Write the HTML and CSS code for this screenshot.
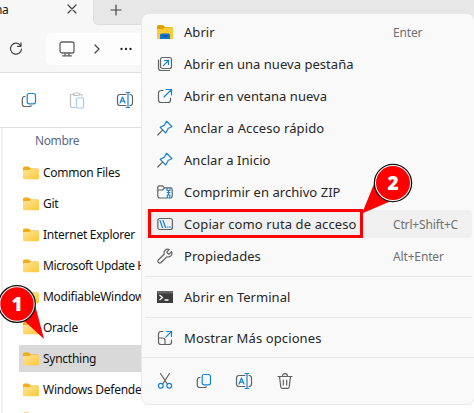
FILE: index.html
```
<!DOCTYPE html>
<html lang="es">
<head>
<meta charset="utf-8">
<title>Explorador</title>
<link rel="stylesheet" href="styles.css">
</head>
<body>
<svg class="defs" width="0" height="0">
  <defs>
    <linearGradient id="gold" x1="0" y1="0" x2="1" y2="1"><stop offset="0" stop-color="#ffe49a"/><stop offset="1" stop-color="#fbc936"/></linearGradient>
    <symbol id="folder" viewBox="0 0 16 14"><path d="M0 2Q0 .5 1.500 .5H5.500L8 2.500H14.500Q16 2.500 16 4V8H0Z" fill="#f0ad16"/><path d="M0 5Q0 4 1 4H6L8 3H15Q16 3 16 4V12Q16 13.300 14.700 13.300H1.300Q0 13.300 0 12Z" fill="url(#gold)"/></symbol>
    <symbol id="copy" viewBox="0 0 16 16"><rect class="b" x="6.200" y="1.500" width="8.300" height="10.300" rx="2"/><path class="g" d="M4 4.500H3.500Q1.300 4.800 1.300 7V12Q1.300 14.500 3.800 14.500H8Q9.800 14.500 10.300 13.800"/></symbol>
    <symbol id="rename" viewBox="0 0 18 18"><path class="g" d="M10 3.500H4Q1.500 3.500 1.500 6V12Q1.500 14.500 4 14.500H10M14 3.500Q16.500 3.500 16.500 6V12Q16.500 14.500 14 14.500"/><path class="b" d="M4 12L6.500 6L9 12M5 10.200H8M12 1.500V16.500M10.200 1.500H13.800M10.200 16.500H13.800"/></symbol>
    <symbol id="pin" viewBox="0 0 16 16"><path class="b" d="M9.500 1.200L14.900 6.500L13.500 7.500L11.300 8.300L8.700 13L3.200 7.400L7.300 5.200Z"/><path class="g" d="M5.500 10.200L.8 15"/></symbol>
  </defs>
</svg>
<div class="screen">
  <main class="window">
    <header class="tabs">
      <div class="tab"><span class="tab-name">na</span><svg class="close" viewBox="0 0 10 10"><path class="k" d="M1 1L9 9M9 1L1 9"/></svg></div>
      <div class="strip"><svg class="plus" viewBox="0 0 12 12"><path class="k" d="M6 1V11M1 6H11"/></svg></div>
    </header>
    <nav class="address">
      <svg class="refresh" viewBox="0 0 14 14"><path class="k" d="M11.500 3.500A5.500 5.500 0 1 0 12.500 7M12 .8V4.300H8.500"/></svg>
      <div class="path">
        <svg class="monitor" viewBox="0 0 16 16"><rect class="g m" x="1" y="1" width="14" height="11" rx="2"/><path class="g m" d="M3.500 14.800H12.500M6 12V15M10 12V15"/></svg>
        <svg class="chevron" viewBox="0 0 6 10"><path class="k" d="M1 1L5 5L1 9"/></svg>
        <svg class="dots" viewBox="0 0 12 4"><circle cx="1.500" cy="2" r="1.150"/><circle cx="6" cy="2" r="1.150"/><circle cx="10.500" cy="2" r="1.150"/></svg>
      </div>
    </nav>
    <div class="toolbar">
      <svg class="i16"><use href="#copy"/></svg>
      <svg class="paste" viewBox="0 0 16 17"><path class="g" d="M5 2.500H2.500Q1.500 2.500 1.500 3.500V14Q1.500 15.500 3 15.500H6M10.500 2.500H12Q13 2.500 13 4"/><rect class="g" x="4.500" y="1" width="6" height="2.500" rx="1.200"/><rect class="b" x="7.500" y="6" width="7" height="10" rx="1"/></svg>
      <svg class="i18"><use href="#rename"/></svg>
    </div>
    <section class="files">
      <div class="heading">Nombre</div>
      <div class="row"><svg><use href="#folder"/></svg><span>Common Files</span></div>
      <div class="row"><svg><use href="#folder"/></svg><span>Git</span></div>
      <div class="row"><svg><use href="#folder"/></svg><span>Internet Explorer</span></div>
      <div class="row long"><svg><use href="#folder"/></svg><span>Microsoft Update Health</span></div>
      <div class="row"><svg><use href="#folder"/></svg><span>ModifiableWindowsApps</span></div>
      <div class="row"><svg><use href="#folder"/></svg><span>Oracle</span></div>
      <div class="row selected"><svg><use href="#folder"/></svg><span>Syncthing</span></div>
      <div class="row"><svg><use href="#folder"/></svg><span>Windows Defender</span></div>
      <div class="row last"><svg><use href="#folder"/></svg></div>
    </section>
  </main>

  <aside class="menu">
    <div class="group first">
      <div class="item"><svg viewBox="0 0 16 16"><path d="M0 2.500Q0 1 1.500 1H6L8 3H14.500Q16 3 16 4.500V14Q16 15 15 15H1Q0 15 0 14Z" fill="#e3a008"/><path d="M0 5H6L8 3.500H16V15H0Z" fill="#ffca35"/><path d="M3 15V11Q3 9.500 4.500 9.500H11.500Q13 9.500 13 11V15Z" fill="#1376cb"/><path d="M5.500 12H10.500" stroke="#064e94" stroke-width="1.200"/></svg><span class="label">Abrir</span><span class="key">Enter</span></div>
      <div class="item"><svg viewBox="0 0 16 16"><rect class="g" x="3.500" y="1.500" width="11" height="11" rx="2"/><path class="g" d="M1.500 4V12Q1.500 14.500 4 14.500H12.500"/><path class="b" d="M6.300 9.700L11.500 4.500M7.500 4.500H11.500V8.500"/></svg><span class="label">Abrir en una nueva pestaña</span></div>
      <div class="item"><svg viewBox="0 0 16 16"><path class="g" d="M6 2.500H4Q1.500 2.500 1.500 5V12Q1.500 14.500 4 14.500H11Q13.500 14.500 13.500 12V10"/><path class="b" d="M7 9L14.500 1.500M9 1.500H14.500V7"/></svg><span class="label">Abrir en ventana nueva</span></div>
      <div class="item"><svg><use href="#pin"/></svg><span class="label wide">Anclar a Acceso rápido</span></div>
      <div class="item"><svg><use href="#pin"/></svg><span class="label">Anclar a Inicio</span></div>
      <div class="item"><svg viewBox="0 0 16 16"><path class="g" d="M9.500 14H3Q.8 14 .8 12V3.500Q.8 1.800 2.500 1.800H5.500L7.500 3.800H13.500Q15.200 3.800 15.200 5.500V12Q15.200 14 13.500 14M.8 6H5.500L7.500 3.800"/><path class="b" d="M10 4V6.500H13V4M11.500 6.500V11M10.200 8.500H13M10.300 11H12.800V14H10.300Z"/></svg><span class="label">Comprimir en archivo ZIP</span></div>
      <div class="item hover"><svg viewBox="0 0 16 16"><rect class="g" x=".8" y="2.500" width="14.600" height="11" rx="2"/><path class="b" d="M3 4.500L5.500 11.500M6 4.500L8.500 11.500M10 11H11M12.500 11H13.500"/></svg><span class="label wide">Copiar como ruta de acceso</span><span class="key">Ctrl+Shift+C</span></div>
      <div class="item"><svg viewBox="0 0 16 16"><path class="g" d="M14.500 3.700L11.800 6.300L9.700 4.200L12.300 1.500C9.500.3 6.300 2.500 7.200 6.200L1.500 11.800C-.2 13.800 2.200 16.100 4.200 14.500L9.800 8.800C13.500 9.700 15.900 6.600 14.500 3.700Z"/></svg><span class="label">Propiedades</span><span class="key">Alt+Enter</span></div>
    </div>
    <div class="group terminal"><div class="item"><svg viewBox="0 0 16 16"><path d="M0 2H16V14H0Z" fill="#3c3c3c"/><path d="M0 2H16V4.500H0Z" fill="#666"/><path d="M2.500 6L5.500 8.500L2.500 11M7.500 11H11.500" fill="none" stroke="#fff" stroke-width="1.300"/></svg><span class="label">Abrir en Terminal</span></div></div>
    <div class="group more"><div class="item"><svg viewBox="0 0 16 16"><path class="g" d="M6 1.500H4Q1.500 1.500 1.500 4V12Q1.500 14.500 4 14.500H12Q14.500 14.500 14.500 12V10M1.500 8H5.500Q8 8 8 10.500V14.500"/><path class="b" d="M8.800 7.200L14.500 1.500M9.500 1.500H14.500V6.500"/></svg><span class="label wide">Mostrar Más opciones</span></div></div>
    <div class="actions">
      <svg class="i16" viewBox="0 0 16 16"><path class="g" d="M3.500 .5L10.300 11M12.500 .5L5.700 11"/><circle class="b" cx="3.800" cy="12.800" r="2.400"/><circle class="b" cx="12.200" cy="12.800" r="2.400"/></svg>
      <svg class="i16"><use href="#copy"/></svg>
      <svg class="i18"><use href="#rename"/></svg>
      <svg class="i16" viewBox="0 0 16 16"><path class="g" d="M1 3.500H15M5.500 3.300Q5.500 .7 8 .7Q10.500 .7 10.500 3.300M2.500 3.500L3.800 14Q4 15.400 5.300 15.400H10.700Q12 15.400 12.200 14L13.500 3.500M6.300 7V12M9.700 7V12"/></svg>
    </div>
  </aside>
  <div class="frame"></div>
  <svg class="callout one" viewBox="0 0 50 70"><path d="M19 31L44 54L35 20Z" fill="#f00"/><circle cx="17" cy="19" r="18.300" fill="#fff" stroke="#111" stroke-width="1.300"/><circle cx="17" cy="19" r="16.700" fill="#f00"/><text x="17" y="25.500">1</text></svg>
  <svg class="callout two" viewBox="0 0 60 60"><path d="M5 50.500L17 21L34 38Z" fill="#f00"/><circle cx="36" cy="20" r="18.600" fill="#fff" stroke="#111" stroke-width="1.300"/><circle cx="36" cy="20" r="17" fill="#f00"/><text x="36" y="26.500">2</text></svg>
</div>
</body>
</html>
```
FILE: styles.css
```
* { box-sizing: border-box; }
body { margin: 0; background: #fff; font-family: "Noto Sans", "Open Sans", sans-serif; }
svg { display: block; flex: none; }
.defs { position: absolute; }
.g, .b, .k { fill: none; stroke-width: 1.200; stroke-linecap: round; stroke-linejoin: round; }
.g { stroke: #626262; }
.b { stroke: #1683d8; }
.k { stroke: #444; }
.m { stroke-width: 1.300; }
.i16 { width: 16px; height: 16px; }
.i18 { width: 18px; height: 18px; }
.screen { position: relative; width: 474px; height: 413px; overflow: hidden; }
.window { height: 413px; }
.tabs { display: flex; height: 25px; background: #f7f7f7; }
.tab { display: flex; width: 93px; }
.tab-name { width: 65px; margin-left: -5px; font-size: 12px; line-height: 20px; letter-spacing: -.5px; color: #111; }
.close { width: 10px; height: 10px; margin: 4px 0 0 7px; }
.strip { flex: 1; background: #e7e7e7; border-bottom-left-radius: 5px; border-left: 1px solid #ddd; border-bottom: 1px solid #ddd; }
.plus { width: 12px; height: 12px; margin: 4px 0 0 16px; }
.address { display: flex; align-items: center; height: 48px; background: #f7f7f7; border-bottom: 1px solid #dedede; }
.refresh { width: 14px; height: 14px; margin-left: 9px; }
.path { display: flex; align-items: center; width: 428px; height: 32px; margin-left: 23px; padding-left: 13px; background: #fdfdfd; border-radius: 5px; }
.monitor { width: 16px; height: 16px; }
.chevron { width: 6px; height: 10px; margin-left: 19px; }
.dots { width: 12px; height: 4px; margin-left: 20px; fill: #222; }
.toolbar { display: flex; align-items: center; height: 55px; padding-left: 21px; border-bottom: 1px solid #dedede; }
.paste { width: 16px; height: 17px; margin: 0 31px 0 32px; opacity: .4; }
.files { height: 285px; margin-left: 1px; padding-left: 16px; border-left: 2px solid #f1f1f1; overflow: hidden; }
.heading { height: 29px; padding-left: 16px; color: #5c6a89; font-size: 12px; line-height: 25px; letter-spacing: -.4px; }
.row { display: flex; align-items: center; height: 31px; font-size: 12px; letter-spacing: -.26px; color: #111; white-space: nowrap; }
.row.long { letter-spacing: -.38px; }
.row svg { width: 16px; height: 14px; margin: 0 4px; }
.row.selected { height: 27px; margin: 2px 0; background: #d9d9d9; }
.row.last { align-items: flex-start; padding-top: 7px; }
.menu { position: absolute; left: 141px; top: 13px; width: 334px; height: 392px; background: #f9f9f9; border: 1px solid #e9e9e9; border-radius: 8px; }
.group { margin: 0 2px 0 3px; border-bottom: 1px solid #e8e8e8; }
.first { height: 263px; padding-top: 2px; }
.terminal { height: 41px; padding-top: 4px; }
.more { height: 40px; margin: 0; padding: 4px 2px 0 3px; }
.item { display: flex; align-items: center; height: 32px; padding-left: 12px; }
.item svg { width: 16px; height: 16px; }
.label { width: 197px; margin: 0 0 1px 11px; font-size: 13px; letter-spacing: .04px; color: #272727; white-space: nowrap; }
.label.wide { letter-spacing: .11px; }
.key { margin-left: 12px; font-size: 12px; color: #707070; letter-spacing: -.15px; white-space: nowrap; }
.hover { height: 28px; margin: 2px 0; background: #f0f0f0; border-radius: 4px; }
.actions { display: flex; align-items: center; height: 46px; padding-left: 15px; gap: 23px; }
.actions svg:last-child { margin-left: 1px; }
.frame { position: absolute; left: 148px; top: 209px; width: 215px; height: 29px; border: 3px solid #f00; }
.callout { position: absolute; overflow: visible; }
.callout text { font: 800 19px "Open Sans", "Noto Sans", sans-serif; fill: #fff; text-anchor: middle; }
.one { left: 0; top: 285px; width: 50px; height: 70px; }
.two { left: 357px; top: 163px; width: 60px; height: 60px; }
```
